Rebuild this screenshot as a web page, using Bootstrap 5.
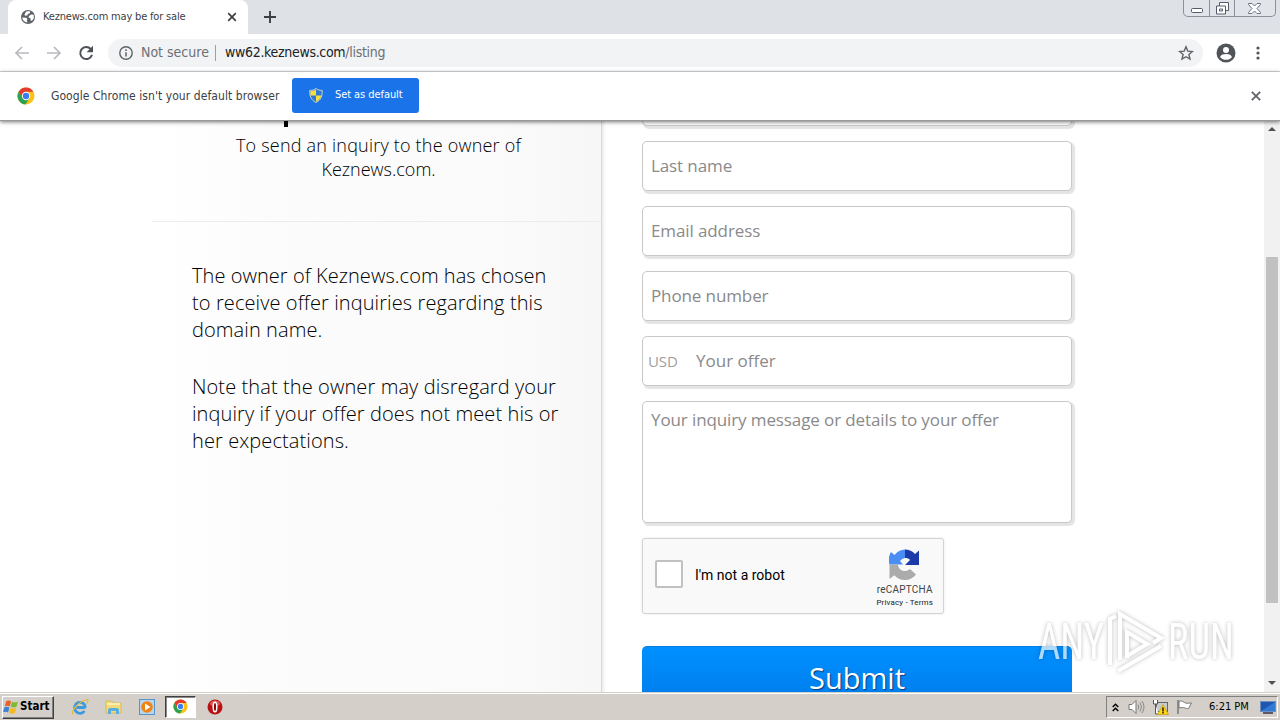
<!DOCTYPE html>
<html lang="en">
<head>
<meta charset="utf-8">
<title>Keznews.com may be for sale</title>
<link href="https://cdn.jsdelivr.net/npm/bootstrap@5.3.0/dist/css/bootstrap.min.css" rel="stylesheet">
<style>
body{width:1280px;height:720px;overflow:hidden;background:#fff;font-family:"DejaVu Sans Condensed","DejaVu Sans",sans-serif;font-stretch:condensed;color:#3c4043}
svg{display:block;flex:none}
.t{white-space:nowrap;display:inline-block}
.tabstrip{height:34px;background:#dee1e6}
.tab{width:240px;height:34px;margin-left:8px;background:#fff;border-radius:8px 8px 0 0;padding-left:13px}
.tab .t{font-size:11px;letter-spacing:-.18px;margin-left:8px;width:143px}
.winctl{width:93px;height:17px;border:1px solid #8c9098;border-top:0;border-radius:0 0 5px 5px;margin-right:4px;background:#e1e4e9}
.winctl>div{height:16px}
.winctl>div+div{border-left:1px solid #8c9098}
.toolbar{height:38px;border-bottom:1px solid #dadce0}
.omni{height:28px;width:1095px;border-radius:14px;background:#f1f3f4;margin-left:14px;font-size:14px}
.infobar{height:49px;z-index:3;box-shadow:0 1px 4px rgba(0,0,0,.55);border-bottom:1px solid #999}
.infobar .msg{font-size:12px;letter-spacing:.07px;margin-left:16px;width:228px}
.setbtn{width:127px;height:35px;background:#1a73e8;border-radius:3px;margin:0 0 2px 13px;padding-left:17px;color:#fff;font-size:11px;letter-spacing:-.07px}
.page-area{height:571px;overflow:hidden;font-family:"Open Sans",sans-serif;font-stretch:normal}
.leftcol{width:450px;margin-left:152px;background:linear-gradient(90deg,#fff 0,#fcfcfc 25%,#fafafa 80%,#f7f7f7);border-right:1px solid #d8d8d8}
.leftcol .head{height:100.5px;border-bottom:1px solid #ececec;font-weight:300;color:#000;font-size:18px;line-height:24px}
.stem{width:4px;height:6px;background:#000;margin-left:132px}
.para{font-weight:300;font-size:20px;line-height:27px;letter-spacing:.1px;color:#000;margin-left:40px}
.edge{width:4px;background:linear-gradient(90deg,#ececec,#fff)}
.formcol{width:430px;margin-left:36px}
.field{height:50px;margin-bottom:15px;border:1px solid #c8c8c8;border-radius:5px;background:#fff;box-shadow:2px 2px 1px 1px #e4e4e4;color:#8a8a8a;font-size:17px;letter-spacing:-.11px;padding-left:8px}
.captcha{width:302px;height:76px;border:1px solid #d3d3d3;border-radius:3px;background:#f9f9f9;box-shadow:0 0 3px rgba(0,0,0,.1);font-family:Roboto,sans-serif}
.cbox{width:28px;height:28px;border:2px solid #c1c1c1;border-radius:2px;background:#fff;margin:0 0 4px 12px}
.submitbtn{height:60px;margin-top:32px;border-radius:5px 5px 0 0;background:linear-gradient(#0090ff,#007fee 48px);border-top:1px solid #0a80dc;color:#fff;font-size:29px;font-weight:400;line-height:62px;text-shadow:1px 1px 1px rgba(0,30,80,.7)}
.sbar{width:16px;background:#f1f1f1}
.thumb{width:12px;height:346px;background:#c1c1c1}
.taskbar{height:28px;background:#d4cfc8;border-top:1px solid #d4d0c8;box-shadow:inset 0 1px #fff;z-index:4;color:#000;font-size:11px}
.startb{width:52px;height:23px;margin:1px 0 0 2px;border:1px solid;border-color:#fff #404040 #404040 #fff;box-shadow:inset -1px -1px #808080;font-weight:700;font-size:11.5px}
.active-app{width:31px;height:22px;background:#fff;border:1px solid;border-color:#404040 #fff #fff #404040;box-shadow:inset 1px 1px #888}
.tray{width:172px;height:22px;border:1px solid;border-color:#808080 #fff #fff #808080;margin-top:1px;margin-right:2px}
.wm{left:1030px;top:600px;z-index:9}
.wm g{filter:drop-shadow(0 0 2px rgba(0,0,0,.4))}
</style>
</head>
<body class="d-flex flex-column position-relative">
<svg width="0" height="0" class="position-absolute"><defs>
<symbol id="chrome" viewBox="0 0 18 18"><circle cx="9" cy="9" r="8.5" fill="#fbc116"/><path d="M1.600 4.800A8.500 8.500 0 0 1 16.400 4.800H9L5.400 11z" fill="#e33b2e"/><path d="M1.600 4.800A8.500 8.500 0 0 0 8.400 17.500L12.600 11 5.400 11z" fill="#2ba24c"/><circle cx="9" cy="9" r="4.200" fill="#fff"/><circle cx="9" cy="9" r="3.200" fill="#3b7ded"/></symbol>
</defs></svg>

<div class="tabstrip d-flex align-items-start flex-shrink-0">
  <div class="tab d-flex align-items-center">
    <svg width="14" height="14" viewBox="0 0 14 14"><circle cx="7" cy="7" r="7" fill="#5f6368"/><path d="M1.200 7.400l4 .3 1.300 1.600-.8 1 .9 2.200A6 6 0 0 1 1.200 7.400zM5 1.700l2.700-.6 1.600.6-.5 1.600-2 .6-.3 1.400-1.800.4L3.300 5zM8 6l2-1.600 2.700.3.200 3.600-1.900 2.500-1.400-.4-.1-2.100L7.500 7.600z" fill="#fff"/></svg>
    <span class="t">Keznews.com may be for sale</span>
    <svg class="ms-auto" style="margin-right:11px" width="10" height="10" viewBox="0 0 10 10"><path d="M1.200 1.200l7.600 7.600M8.800 1.200L1.200 8.800" stroke="#3c4043" stroke-width="1.700"/></svg>
  </div>
  <svg width="12" height="12" viewBox="0 0 12 12" style="margin:11px 0 0 16px"><path d="M6 0v12M0 6h12" stroke="#3c4043" stroke-width="1.900"/></svg>
  <div class="winctl d-flex ms-auto">
    <div class="d-flex align-items-center justify-content-center" style="width:25px"><svg width="12" height="5" class="mt-1"><rect x=".5" y=".5" width="11" height="4" rx="1" fill="#fff" stroke="#555b6b"/></svg></div>
    <div class="d-flex align-items-center justify-content-center" style="width:25px"><svg width="13" height="13"><path d="M3.500 .5h9v8h-3v3.500h-9v-8h3z" fill="#fff" stroke="#555b6b"/><path d="M3.500 4h6v5M3.500 7h3v2h-3z" fill="none" stroke="#555b6b"/></svg></div>
    <div class="d-flex align-items-center justify-content-center flex-grow-1"><svg width="13" height="11" style="margin-right:2px"><path d="M.5 .5h3.500l2.500 2.500L9 .5h3.500v1L9 5.500l3.500 4v1H9L6.500 8 4 10.500H.5v-1l3.500-4-3.500-4z" fill="#fff" stroke="#6a7080"/></svg></div>
  </div>
</div>

<div class="toolbar d-flex align-items-center flex-shrink-0">
  <svg width="16" height="14" viewBox="0 0 16 14" style="margin-left:14px"><path d="M15 7H2M8 1L2 7l6 6" fill="none" stroke="#b8babd" stroke-width="1.700"/></svg>
  <svg width="16" height="14" viewBox="0 0 16 14" style="margin-left:16px"><path d="M1 7h13M8 1l6 6-6 6" fill="none" stroke="#b8babd" stroke-width="1.700"/></svg>
  <svg width="16" height="16" viewBox="0 0 16 16" style="margin-left:16px"><path d="M12.700 4A6 6 0 1 0 14 9.800" fill="none" stroke="#4d5156" stroke-width="2"/><path d="M15 .8v6.400H8.600z" fill="#4d5156"/></svg>
  <div class="omni d-flex align-items-center">
    <svg width="14" height="14" viewBox="0 0 14 14" style="margin-left:11px"><circle cx="7" cy="7" r="6.200" fill="none" stroke="#5f6368" stroke-width="1.400"/><path d="M7 6.200v4.300M7 3.300v1.600" stroke="#5f6368" stroke-width="1.500"/></svg>
    <span class="t" style="margin-left:8px;width:67px;color:#6c7075">Not secure</span>
    <div style="width:1px;height:16px;margin-left:7px;background:#9aa0a6"></div>
    <span class="t" style="margin-left:9px;color:#202124;letter-spacing:-.31px">ww62.keznews.com<span style="color:#6c7075">/listing</span></span>
    <svg class="ms-auto" style="margin-right:9px" width="16" height="16" viewBox="0 0 16 16"><path d="M8 1.800l1.800 4.300 4.600.4-3.500 3 1.100 4.600L8 11.700l-4 2.400 1.100-4.600-3.500-3 4.600-.4z" fill="none" stroke="#5f6368" stroke-width="1.400"/></svg>
  </div>
  <svg width="20" height="20" viewBox="0 0 20 20" style="margin-left:13px"><circle cx="10" cy="10" r="9.500" fill="#505358"/><circle cx="10" cy="7" r="3" fill="#fff"/><path d="M4 14c1-2.400 3.500-3 6-3s5 .6 6 3c-1.500 2-3.700 2.800-6 2.800S5.500 16 4 14z" fill="#fff"/></svg>
  <svg width="4" height="14" viewBox="0 0 4 14" style="margin-left:20px" fill="#505358"><circle cx="2" cy="2" r="1.600"/><circle cx="2" cy="7" r="1.600"/><circle cx="2" cy="12" r="1.600"/></svg>
</div>

<div class="infobar bg-white d-flex align-items-center flex-shrink-0 position-relative">
  <svg width="18" height="18" style="margin-left:17px"><use href="#chrome"/></svg>
  <span class="t msg">Google Chrome isn't your default browser</span>
  <div class="setbtn d-flex align-items-center">
    <svg width="14" height="15" viewBox="0 0 14 15"><path d="M7 .5C5 2 3 2.500 .8 2.400 .6 8 2 12 7 14.500 12 12 13.400 8 13.200 2.400 11 2.500 9 2 7 .5z" fill="#2e78d8" stroke="#cfd6c2"/><path d="M7 1.500v6H1.600C1.300 6 1.400 4.800 1.500 3.200 3.500 3.200 5.500 2.700 7 1.500zM7 7.500h5.400C11.800 10 10 12.300 7 13.700z" fill="#f8df3c"/></svg>
    <span class="t" style="margin-left:12px">Set as default</span>
  </div>
  <svg class="ms-auto" style="margin-right:19px" width="10" height="10" viewBox="0 0 10 10"><path d="M.8 .8l8.400 8.400M9.200 .8L.8 9.200" stroke="#5f6368" stroke-width="1.800"/></svg>
</div>

<div class="page-area d-flex flex-shrink-0">
  <div class="leftcol flex-shrink-0">
    <div class="head">
      <div class="stem"></div>
      <div class="text-center" style="padding-top:6px;margin-left:4px"><span class="t" style="letter-spacing:.21px">To send an inquiry to the owner of</span><br><span class="t">Keznews.com.</span></div>
    </div>
    <div class="para" style="margin-top:40px"><span class="t" style="letter-spacing:.05px">The owner of Keznews.com has chosen</span><br><span class="t">to receive offer inquiries regarding this</span><br><span class="t">domain name.</span></div>
    <div class="para" style="margin-top:30px"><span class="t">Note that the owner may disregard your</span><br><span class="t">inquiry if your offer does not meet his or</span><br><span class="t">her expectations.</span></div>
  </div>
  <div class="edge"></div>
  <div class="formcol flex-shrink-0">
    <div class="field" style="margin-top:-45px"></div>
    <div class="field d-flex align-items-center"><span class="t">Last name</span></div>
    <div class="field d-flex align-items-center"><span class="t">Email address</span></div>
    <div class="field d-flex align-items-center"><span class="t">Phone number</span></div>
    <div class="field d-flex align-items-center" style="padding-left:5px"><span class="t" style="font-size:15px;color:#a0a0a0;width:48px">USD</span><span class="t" style="letter-spacing:0">Your offer</span></div>
    <div class="field" style="height:122px;padding-top:5px"><span class="t">Your inquiry message or details to your offer</span></div>
    <div class="captcha d-flex align-items-center">
      <div class="cbox"></div>
      <span class="t" style="margin:0 0 2px 12px;font-size:14px;color:#000">I'm not a robot</span>
      <div class="ms-auto d-flex flex-column align-items-center" style="margin-right:10px;padding-top:5px;color:#444">
        <svg width="31" height="31" viewBox="0 0 31 31"><path d="M2 3l3.500 3A14 14 0 0 1 16 .5V9a7 7 0 0 0-5 3l3 3.500H.5A15 15 0 0 1 2 3z" fill="#4a8df5"/><path d="M16 .5c4 0 7.500 1.500 10 4.500l4-3.500V16H16l5-5c-1-1.500-3-2-5-2z" fill="#1c3aa9"/><path d="M.5 15.500H9c.3 4 3 6.500 7 6.500 2 0 3.500-.7 5-2l6 5.500C24.500 29 20.500 31 16 31c-4.500 0-8-1.600-10.700-4.800L.5 30z" fill="#ababab"/></svg>
        <span class="t" style="font-size:10px;line-height:14px;margin-top:3px;letter-spacing:.2px">reCAPTCHA</span>
        <span class="t" style="font-size:8px;line-height:11px;color:#222;letter-spacing:.15px">Privacy - Terms</span>
      </div>
    </div>
    <div class="submitbtn text-center"><span class="t">Submit</span></div>
  </div>
  <div class="sbar ms-auto d-flex flex-column align-items-center">
    <svg width="8" height="4" style="margin-top:6px;margin-bottom:-10px"><path d="M0 4l4-4 4 4z" fill="#505050"/></svg>
    <div class="thumb" style="margin-top:136px;margin-bottom:auto"></div>
    <svg width="8" height="4" style="margin-bottom:7px"><path d="M0 0l4 4 4-4z" fill="#505050"/></svg>
  </div>
</div>

<div class="taskbar d-flex align-items-center flex-shrink-0">
  <div class="startb d-flex align-items-center">
    <svg width="17" height="16" viewBox="0 0 16 15"><path d="M3 2c2-1 3.500-.6 4.600.2L6.300 7C5 6 3.500 6 1.700 6.800z" fill="#e8602c"/><path d="M8.500 2.500c1.500 1 3.400 1 5.500 0l-1.300 4.700c-2 1-4 .8-5.500-.2z" fill="#83b932"/><path d="M1.400 7.800C3.200 7 4.700 7 6 8l-1.200 4.700C3.500 11.800 2 11.800 0 12.500z" fill="#3b82d0"/><path d="M7 8.300c1.500 1 3.400 1 5.500.2l-1.300 4.700c-2 1-4 .8-5.500-.3z" fill="#f3b922"/></svg>
    <span class="t">Start</span>
  </div>
  <svg width="18" height="18" viewBox="0 0 18 18" style="margin-left:17px"><path d="M14.500 9.500H5.300M14.500 9.500a5.500 5.500 0 1 0-1 3.500" fill="none" stroke="#3b9bdc" stroke-width="2.800"/><path d="M2 16.500C-.5 13 8 3 16.500 1.500c1 1 .3 2.500-.5 4" fill="none" stroke="#e7b93c" stroke-width="1.200"/></svg>
  <svg width="17" height="16" viewBox="0 0 17 16" style="margin-left:16px"><path d="M1 2h6l1 2h8v10H1z" fill="#f1da7a" stroke="#d5b64d" stroke-width=".8"/><path d="M2 5h13" stroke="#fff6c8" stroke-width="1.500"/><path d="M3 15v-4q0-2 2-2h7q2 0 2 2v4h-3v-3H6v3z" fill="#5aade0"/></svg>
  <svg width="16" height="16" viewBox="0 0 16 16" style="margin-left:17px"><rect x=".5" y=".5" width="15" height="15" fill="#b6d6ef" stroke="#5893c9"/><circle cx="8" cy="8" r="5.800" fill="#f08314"/><path d="M6 4.500v7L11.500 8z" fill="#fff"/></svg>
  <div class="active-app d-flex align-items-center justify-content-center" style="margin-left:10px"><svg width="15" height="15"><use href="#chrome"/></svg></div>
  <svg width="16" height="16" viewBox="0 0 16 16" style="margin-left:11px"><circle cx="8" cy="8" r="7.500" fill="#b81214"/><ellipse cx="8" cy="4.500" rx="5" ry="3" fill="#dc5a55"/><ellipse cx="8" cy="8" rx="1.800" ry="4.800" fill="#8c0508" stroke="#fff" stroke-width="1.500"/></svg>
  <div class="tray d-flex align-items-center ms-auto">
    <svg width="7" height="9" viewBox="0 0 7 9" style="margin-left:5px"><path d="M.7 4L3.500 1.200 6.300 4M.7 8l2.800-2.800L6.300 8" fill="none" stroke="#000" stroke-width="1.400"/></svg>
    <svg width="17" height="16" viewBox="0 0 17 16" style="margin-left:9px"><path d="M1 5.500h3l4-4v13l-4-4H1z" fill="#fff" stroke="#777"/><path d="M10 5.500q1.500 2.500 0 5M12 3.500q3 4.500 0 9M14 2q4 6 0 12" fill="none" stroke="#888"/></svg>
    <svg width="17" height="16" viewBox="0 0 17 16" style="margin-left:7px"><rect x="4.500" y="3.500" width="11" height="9" fill="#c8ccd0" stroke="#666"/><path d="M1.500 1v4h4V1M3.500 5v10h3" fill="#fff" stroke="#555"/><path d="M11 5.500l5.500 10h-11z" fill="#ffd71c" stroke="#c99a00" stroke-width=".7"/><path d="M11 8.500v4M11 13v1.500" stroke="#000" stroke-width="1.300"/></svg>
    <svg width="17" height="16" viewBox="0 0 17 16" style="margin-left:7px"><path d="M2 1v14" stroke="#777" stroke-width="1.500"/><path d="M3 2.500c3-1.500 4 .5 6.500 1.500 2 .5 4 0 6 0l-3 5.500c-3 .5-4-2-9.500-.5z" fill="#fff" stroke="#777"/></svg>
    <span class="t" style="margin-left:16px">6:21 PM</span>
    <svg width="16" height="13" viewBox="0 0 16 13" class="ms-auto" style="margin-right:1px"><rect x=".5" y=".5" width="15" height="10" fill="#1e56b0" stroke="#6c8fc4"/><path d="M1 10L15 1v9z" fill="#2f7bd4"/><path d="M3 12h10" stroke="#334" stroke-width="1.500"/></svg>
  </div>
</div>

<svg class="wm position-absolute" width="212" height="80" viewBox="0 0 212 80">
  <g opacity=".68" fill="#fff" font-family="Roboto" font-size="50">
    <text x="8" y="59" textLength="66" lengthAdjust="spacingAndGlyphs">ANY</text>
    <text x="138" y="59" textLength="66" lengthAdjust="spacingAndGlyphs">RUN</text>
    <path d="M80 65V19l6-3M90 60V14l41 24-8 5M97 58V32l20 12-20 12M88 71l43-25" fill="none" stroke="#fff" stroke-width="4"/>
  </g>
</svg>
<script src="https://cdn.jsdelivr.net/npm/bootstrap@5.3.0/dist/js/bootstrap.bundle.min.js"></script>
</body>
</html>
